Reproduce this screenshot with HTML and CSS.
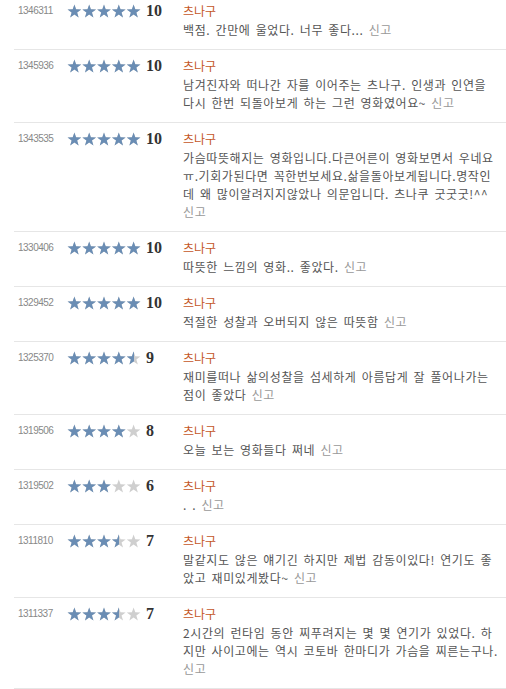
FILE: index.html
```html
<!DOCTYPE html>
<html lang="ko">
<head>
    <meta charset="UTF-8">
    <meta name="viewport" content="width=device-width, initial-scale=1.0">
    <title>네티즌 평점</title>
    <link rel="stylesheet" href="styles.css">
</head>
<body>
    <svg class="defs" width="0" height="0">
        <symbol id="star" viewBox="0 0 14.8 14">
            <polygon points="7.4,0.4 9.1,5.25 14.25,5.38 10.16,8.5 11.63,13.42 7.4,10.5 3.17,13.42 4.64,8.5 0.55,5.38 5.7,5.25"/>
        </symbol>
    </svg>

    <ul class="reviews">
        <li class="review">
            <span class="num">1346311</span>
            <span class="rating">
                <span class="stars">
                    <svg class="off" width="74" height="14"><use href="#star" x="0" width="14.8" height="14"/><use href="#star" x="14.8" width="14.8" height="14"/><use href="#star" x="29.6" width="14.8" height="14"/><use href="#star" x="44.4" width="14.8" height="14"/><use href="#star" x="59.2" width="14.8" height="14"/></svg>
                    <span class="on" style="width:100%"><svg width="74" height="14"><use href="#star" x="0" width="14.8" height="14"/><use href="#star" x="14.8" width="14.8" height="14"/><use href="#star" x="29.6" width="14.8" height="14"/><use href="#star" x="44.4" width="14.8" height="14"/><use href="#star" x="59.2" width="14.8" height="14"/></svg></span>
                </span>
                <em class="score">10</em>
            </span>
            <div class="body">
                <a class="name" href="#">츠나구</a>
                <p class="text">백점. 간만에 울었다. 너무 좋다... <a class="report" href="#">신고</a></p>
            </div>
        </li>
        <li class="review">
            <span class="num">1345936</span>
            <span class="rating">
                <span class="stars">
                    <svg class="off" width="74" height="14"><use href="#star" x="0" width="14.8" height="14"/><use href="#star" x="14.8" width="14.8" height="14"/><use href="#star" x="29.6" width="14.8" height="14"/><use href="#star" x="44.4" width="14.8" height="14"/><use href="#star" x="59.2" width="14.8" height="14"/></svg>
                    <span class="on" style="width:100%"><svg width="74" height="14"><use href="#star" x="0" width="14.8" height="14"/><use href="#star" x="14.8" width="14.8" height="14"/><use href="#star" x="29.6" width="14.8" height="14"/><use href="#star" x="44.4" width="14.8" height="14"/><use href="#star" x="59.2" width="14.8" height="14"/></svg></span>
                </span>
                <em class="score">10</em>
            </span>
            <div class="body">
                <a class="name" href="#">츠나구</a>
                <p class="text">남겨진자와 떠나간 자를 이어주는 츠나구. 인생과 인연을 다시 한번 되돌아보게 하는 그런 영화였어요~ <a class="report" href="#">신고</a></p>
            </div>
        </li>
        <li class="review">
            <span class="num">1343535</span>
            <span class="rating">
                <span class="stars">
                    <svg class="off" width="74" height="14"><use href="#star" x="0" width="14.8" height="14"/><use href="#star" x="14.8" width="14.8" height="14"/><use href="#star" x="29.6" width="14.8" height="14"/><use href="#star" x="44.4" width="14.8" height="14"/><use href="#star" x="59.2" width="14.8" height="14"/></svg>
                    <span class="on" style="width:100%"><svg width="74" height="14"><use href="#star" x="0" width="14.8" height="14"/><use href="#star" x="14.8" width="14.8" height="14"/><use href="#star" x="29.6" width="14.8" height="14"/><use href="#star" x="44.4" width="14.8" height="14"/><use href="#star" x="59.2" width="14.8" height="14"/></svg></span>
                </span>
                <em class="score">10</em>
            </span>
            <div class="body">
                <a class="name" href="#">츠나구</a>
                <p class="text">가슴따뜻해지는 영화입니다.다큰어른이 영화보면서 우네요ㅠ.기회가된다면 꼭한번보세요.삶을돌아보게됩니다.명작인데 왜 많이알려지지않았나 의문입니다. 츠나쿠 굿굿굿!^^ <a class="report" href="#">신고</a></p>
            </div>
        </li>
        <li class="review">
            <span class="num">1330406</span>
            <span class="rating">
                <span class="stars">
                    <svg class="off" width="74" height="14"><use href="#star" x="0" width="14.8" height="14"/><use href="#star" x="14.8" width="14.8" height="14"/><use href="#star" x="29.6" width="14.8" height="14"/><use href="#star" x="44.4" width="14.8" height="14"/><use href="#star" x="59.2" width="14.8" height="14"/></svg>
                    <span class="on" style="width:100%"><svg width="74" height="14"><use href="#star" x="0" width="14.8" height="14"/><use href="#star" x="14.8" width="14.8" height="14"/><use href="#star" x="29.6" width="14.8" height="14"/><use href="#star" x="44.4" width="14.8" height="14"/><use href="#star" x="59.2" width="14.8" height="14"/></svg></span>
                </span>
                <em class="score">10</em>
            </span>
            <div class="body">
                <a class="name" href="#">츠나구</a>
                <p class="text">따뜻한 느낌의 영화.. 좋았다. <a class="report" href="#">신고</a></p>
            </div>
        </li>
        <li class="review">
            <span class="num">1329452</span>
            <span class="rating">
                <span class="stars">
                    <svg class="off" width="74" height="14"><use href="#star" x="0" width="14.8" height="14"/><use href="#star" x="14.8" width="14.8" height="14"/><use href="#star" x="29.6" width="14.8" height="14"/><use href="#star" x="44.4" width="14.8" height="14"/><use href="#star" x="59.2" width="14.8" height="14"/></svg>
                    <span class="on" style="width:100%"><svg width="74" height="14"><use href="#star" x="0" width="14.8" height="14"/><use href="#star" x="14.8" width="14.8" height="14"/><use href="#star" x="29.6" width="14.8" height="14"/><use href="#star" x="44.4" width="14.8" height="14"/><use href="#star" x="59.2" width="14.8" height="14"/></svg></span>
                </span>
                <em class="score">10</em>
            </span>
            <div class="body">
                <a class="name" href="#">츠나구</a>
                <p class="text">적절한 성찰과 오버되지 않은 따뜻함 <a class="report" href="#">신고</a></p>
            </div>
        </li>
        <li class="review">
            <span class="num">1325370</span>
            <span class="rating">
                <span class="stars">
                    <svg class="off" width="74" height="14"><use href="#star" x="0" width="14.8" height="14"/><use href="#star" x="14.8" width="14.8" height="14"/><use href="#star" x="29.6" width="14.8" height="14"/><use href="#star" x="44.4" width="14.8" height="14"/><use href="#star" x="59.2" width="14.8" height="14"/></svg>
                    <span class="on" style="width:90%"><svg width="74" height="14"><use href="#star" x="0" width="14.8" height="14"/><use href="#star" x="14.8" width="14.8" height="14"/><use href="#star" x="29.6" width="14.8" height="14"/><use href="#star" x="44.4" width="14.8" height="14"/><use href="#star" x="59.2" width="14.8" height="14"/></svg></span>
                </span>
                <em class="score">9</em>
            </span>
            <div class="body">
                <a class="name" href="#">츠나구</a>
                <p class="text">재미를떠나 삶의성찰을 섬세하게 아름답게 잘 풀어나가는 점이 좋았다 <a class="report" href="#">신고</a></p>
            </div>
        </li>
        <li class="review">
            <span class="num">1319506</span>
            <span class="rating">
                <span class="stars">
                    <svg class="off" width="74" height="14"><use href="#star" x="0" width="14.8" height="14"/><use href="#star" x="14.8" width="14.8" height="14"/><use href="#star" x="29.6" width="14.8" height="14"/><use href="#star" x="44.4" width="14.8" height="14"/><use href="#star" x="59.2" width="14.8" height="14"/></svg>
                    <span class="on" style="width:80%"><svg width="74" height="14"><use href="#star" x="0" width="14.8" height="14"/><use href="#star" x="14.8" width="14.8" height="14"/><use href="#star" x="29.6" width="14.8" height="14"/><use href="#star" x="44.4" width="14.8" height="14"/><use href="#star" x="59.2" width="14.8" height="14"/></svg></span>
                </span>
                <em class="score">8</em>
            </span>
            <div class="body">
                <a class="name" href="#">츠나구</a>
                <p class="text">오늘 보는 영화들다 쩌네 <a class="report" href="#">신고</a></p>
            </div>
        </li>
        <li class="review">
            <span class="num">1319502</span>
            <span class="rating">
                <span class="stars">
                    <svg class="off" width="74" height="14"><use href="#star" x="0" width="14.8" height="14"/><use href="#star" x="14.8" width="14.8" height="14"/><use href="#star" x="29.6" width="14.8" height="14"/><use href="#star" x="44.4" width="14.8" height="14"/><use href="#star" x="59.2" width="14.8" height="14"/></svg>
                    <span class="on" style="width:60%"><svg width="74" height="14"><use href="#star" x="0" width="14.8" height="14"/><use href="#star" x="14.8" width="14.8" height="14"/><use href="#star" x="29.6" width="14.8" height="14"/><use href="#star" x="44.4" width="14.8" height="14"/><use href="#star" x="59.2" width="14.8" height="14"/></svg></span>
                </span>
                <em class="score">6</em>
            </span>
            <div class="body">
                <a class="name" href="#">츠나구</a>
                <p class="text">. . <a class="report" href="#">신고</a></p>
            </div>
        </li>
        <li class="review">
            <span class="num">1311810</span>
            <span class="rating">
                <span class="stars">
                    <svg class="off" width="74" height="14"><use href="#star" x="0" width="14.8" height="14"/><use href="#star" x="14.8" width="14.8" height="14"/><use href="#star" x="29.6" width="14.8" height="14"/><use href="#star" x="44.4" width="14.8" height="14"/><use href="#star" x="59.2" width="14.8" height="14"/></svg>
                    <span class="on" style="width:70%"><svg width="74" height="14"><use href="#star" x="0" width="14.8" height="14"/><use href="#star" x="14.8" width="14.8" height="14"/><use href="#star" x="29.6" width="14.8" height="14"/><use href="#star" x="44.4" width="14.8" height="14"/><use href="#star" x="59.2" width="14.8" height="14"/></svg></span>
                </span>
                <em class="score">7</em>
            </span>
            <div class="body">
                <a class="name" href="#">츠나구</a>
                <p class="text">말같지도 않은 얘기긴 하지만 제법 감동이있다! 연기도 좋았고 재미있게봤다~ <a class="report" href="#">신고</a></p>
            </div>
        </li>
        <li class="review">
            <span class="num">1311337</span>
            <span class="rating">
                <span class="stars">
                    <svg class="off" width="74" height="14"><use href="#star" x="0" width="14.8" height="14"/><use href="#star" x="14.8" width="14.8" height="14"/><use href="#star" x="29.6" width="14.8" height="14"/><use href="#star" x="44.4" width="14.8" height="14"/><use href="#star" x="59.2" width="14.8" height="14"/></svg>
                    <span class="on" style="width:70%"><svg width="74" height="14"><use href="#star" x="0" width="14.8" height="14"/><use href="#star" x="14.8" width="14.8" height="14"/><use href="#star" x="29.6" width="14.8" height="14"/><use href="#star" x="44.4" width="14.8" height="14"/><use href="#star" x="59.2" width="14.8" height="14"/></svg></span>
                </span>
                <em class="score">7</em>
            </span>
            <div class="body">
                <a class="name" href="#">츠나구</a>
                <p class="text">2시간의 런타임 동안 찌푸려지는 몇 몇 연기가 있었다. 하지만 사이고에는 역시 코토바 한마디가 가슴을 찌른는구나. <a class="report" href="#">신고</a></p>
            </div>
        </li>
    </ul>
</body>
</html>
```

FILE: styles.css
```css
body{
    margin: 0;
    background: #fff;
    font-family: "Noto Sans CJK KR", "Liberation Sans", sans-serif;
    font-size: 12px;
    color: #555;
}
.defs{
    position: absolute;
}
.reviews{
    list-style: none;
    margin: -5px 0 0 14px;
    padding: 0;
}
.review{
    display: flex;
    align-items: flex-start;
    padding: 7px 6px 10px 4px;
    border-bottom: 1px solid #e6e6e6;
}
.num{
    width: 49px;
    flex-shrink: 0;
    font-family: "Liberation Sans", sans-serif;
    font-size: 10px;
    letter-spacing: -0.5px;
    line-height: 18px;
    color: #888;
}
.rating{
    width: 116px;
    flex-shrink: 0;
    display: flex;
    align-items: center;
    height: 18px;
}
.stars{
    position: relative;
    width: 74px;
    height: 14px;
    margin-right: 5px;
}
.stars svg{
    display: block;
}
.stars .off{
    fill: #cfcfcf;
}
.stars .on{
    position: absolute;
    left: 0;
    top: 0;
    height: 14px;
    overflow: hidden;
    fill: #6a8db4;
}
.score{
    font-style: normal;
    font-family: "Liberation Serif", serif;
    font-weight: bold;
    font-size: 16px;
    color: #333;
}
.body{
    flex: 1;
    min-width: 0;
}
.name{
    display: block;
    line-height: 18px;
    margin-bottom: 1px;
    color: #c4561f;
    text-decoration: none;
}
.text{
    margin: 0;
    line-height: 18px;
    letter-spacing: 0.6px;
    word-spacing: 1.3px;
}
.report{
    color: #999;
    text-decoration: none;
}
```
